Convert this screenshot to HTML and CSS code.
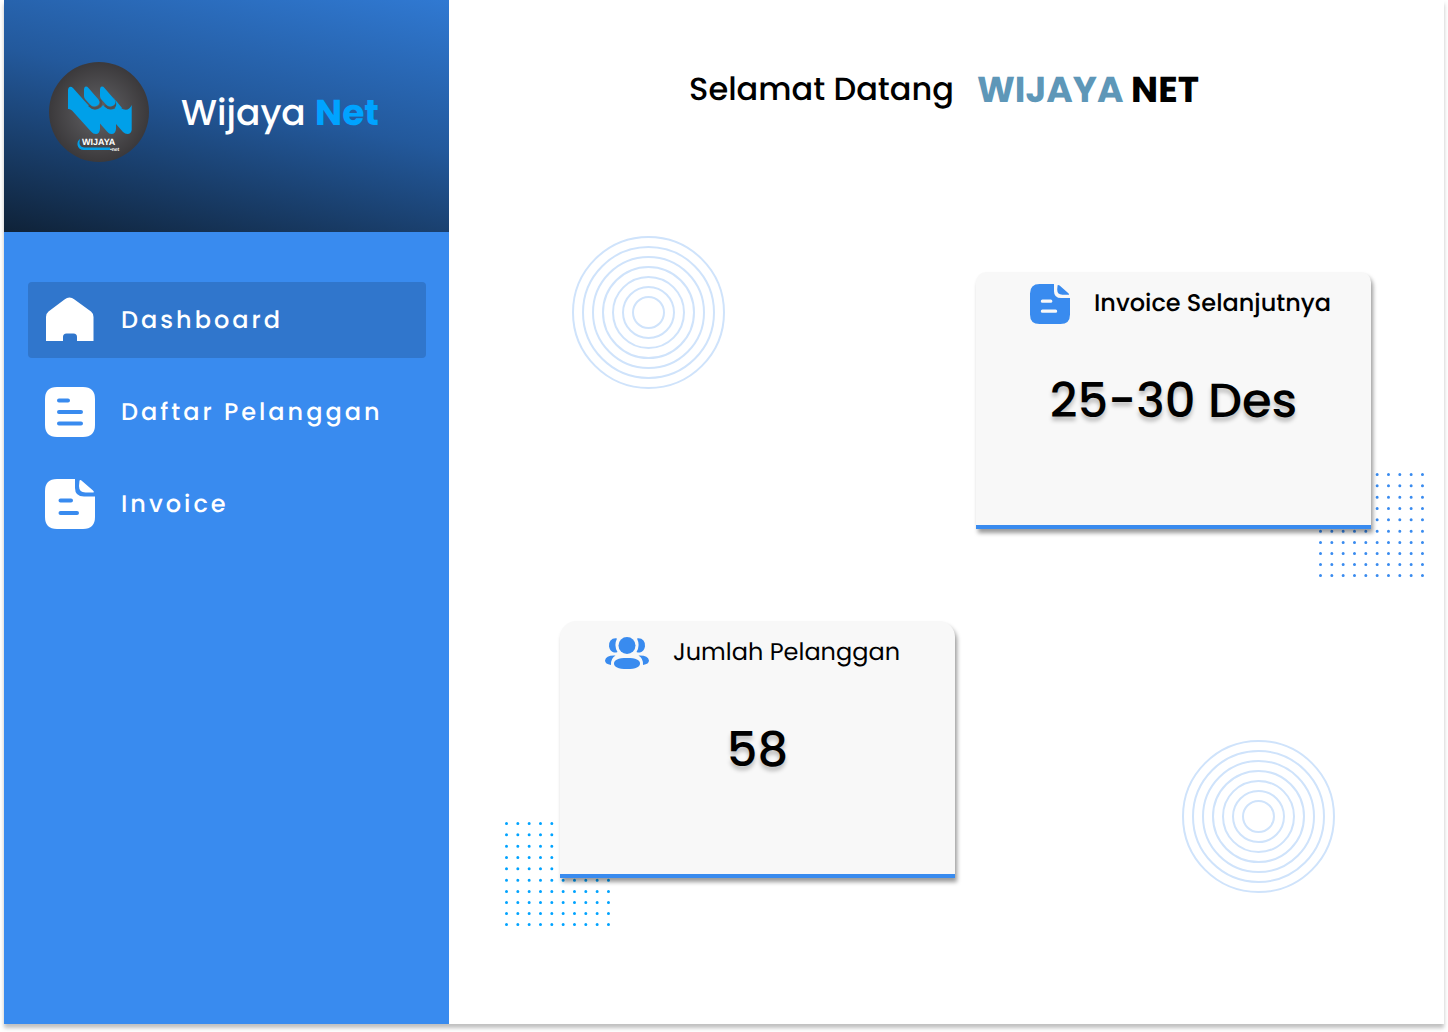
FILE: index.html
```html
<!DOCTYPE html>
<html lang="id">
<head>
<meta charset="utf-8">
<meta name="viewport" content="width=device-width, initial-scale=1">
<title>Wijaya Net - Dashboard</title>
<link rel="stylesheet" href="styles.css">
</head>
<body>
<svg class="sprite" aria-hidden="true">
  <symbol id="invoice" viewBox="0 0 50 50">
    <path fill-rule="evenodd" d="M12 0H30V9Q30 17.500 39 17.500H50V38Q50 50 38 50H12Q0 50 0 38V12Q0 0 12 0ZM15.500 19.500a2 2 0 0 0 0 4H26a2 2 0 0 0 0-4ZM15.500 32a2 2 0 0 0 0 4H32a2 2 0 0 0 0-4Z"/>
    <path d="M34.500 1.500Q35.500.500 37 2L48 11.500Q50 13.500 47.500 13.500H40.500Q34 13.500 34 7Z"/>
  </symbol>
  <symbol id="rings" viewBox="0 0 153 153">
    <g fill="none" stroke="#cfe3fb" stroke-width="2">
      <circle cx="76.500" cy="76.500" r="15.500"/><circle cx="76.500" cy="76.500" r="25.500"/><circle cx="76.500" cy="76.500" r="35.500"/><circle cx="76.500" cy="76.500" r="45.500"/><circle cx="76.500" cy="76.500" r="55.500"/><circle cx="76.500" cy="76.500" r="65.500"/><circle cx="76.500" cy="76.500" r="75.500"/>
    </g>
  </symbol>
  <symbol id="dots" viewBox="0 0 105 104">
    <path fill="none" stroke="currentColor" stroke-width="3" stroke-linecap="round" stroke-dasharray="0 11.330" d="M1.500 1.500h102.500M1.500 12.800h102.500M1.500 24.200h102.500M1.500 35.500h102.500M1.500 46.800h102.500M1.500 58.200h102.500M1.500 69.500h102.500M1.500 80.500h102.500M1.500 91.500h102.500M1.500 102.500h102.500"/>
  </symbol>
  <symbol id="leaf" viewBox="0 0 100 100" overflow="visible">
    <path d="M35 27Q35.500 24.500 37 24.600Q38.300 24.600 39.500 26L49.500 37.500Q52 41 48.500 43.500Q44 46 41 42.500L36 37Q35 35.500 35 34Z"/>
  </symbol>
</svg>
<div class="page">
  <aside class="sidebar">
    <div class="brand">
      <svg class="logo" viewBox="0 0 100 100" aria-hidden="true">
        <defs>
          <radialGradient id="disc"><stop offset="0" stop-color="#636366"/><stop offset="1" stop-color="#3b393b"/></radialGradient>
        </defs>
        <circle cx="50" cy="50" r="50" fill="url(#disc)"/>
        <path fill="#00a0e9" d="M19 28Q19.500 24.700 21.500 24.700Q22.700 24.700 24 26L40 44Q45.500 50 52 45.500L54 43L56 45Q62 50 68 45L69 43L71 45.500Q79 51 82.700 43V68Q82 72 78.500 72Q76 72 74 70L67 62V67Q66.500 72 62.500 72Q60 72 58 69.500L51 61.500V67Q50.500 72 47 72Q44 72 42 69.500L23 48.500Q21 46.500 19 47Z"/>
        <path fill="none" stroke="#505052" stroke-width="2" d="M40 43.500Q45.500 49 51 44Q53 41.500 51 37.500M56 43.500Q61.500 49 66 43.500Q68 41 66 37.500"/>
        <path fill="#00a0e9" d="M64 35L73 46L67 50L66 46Q68.500 42 66 38Z"/>
        <g fill="#00a0e9"><use href="#leaf" width="100" height="100"/><use href="#leaf" x="16" width="100" height="100"/></g>
        <path fill="#00a0e9" d="M31 77Q28 79 28.500 83Q29.500 88 35 88H61V85.500H35Q29 85 31 77Z"/>
        <text class="logo-name" x="33" y="83">WIJAYA</text>
        <text class="logo-net" x="61" y="89">•net</text>
      </svg>
      <p class="brand-name">Wijaya <strong>Net</strong></p>
    </div>
    <nav class="nav">
      <a class="nav-link active" href="#" aria-current="page">
        <svg class="nav-icon" viewBox="0 0 50 50" aria-hidden="true"><path d="M1 46V22Q1 18.500 3.500 16.500L19.500 4.500Q24.500.500 29.500 4.500L46 16.500Q48.500 18.500 48.500 22V46H32V42Q32 38.500 28.500 38.500H21.500Q18 38.500 18 42V46Z"/></svg>
        Dashboard
      </a>
      <a class="nav-link" href="#">
        <svg class="nav-icon" viewBox="0 0 50 50" aria-hidden="true"><path fill-rule="evenodd" d="M12 0H38Q50 0 50 12V38Q50 50 38 50H12Q0 50 0 38V12Q0 0 12 0ZM14 11.500a2 2 0 0 0 0 4H23a2 2 0 0 0 0-4ZM14 23a2 2 0 0 0 0 4H36a2 2 0 0 0 0-4ZM14 34.500a2 2 0 0 0 0 4H36a2 2 0 0 0 0-4Z"/></svg>
        Daftar Pelanggan
      </a>
      <a class="nav-link" href="#">
        <svg class="nav-icon" aria-hidden="true"><use href="#invoice"/></svg>
        Invoice
      </a>
    </nav>
  </aside>
  <main class="main">
    <h1 class="welcome"><span class="greeting">Selamat Datang</span> <span class="company"><span class="company-first">WIJAYA</span> NET</span></h1>
    <div class="board">
      <svg class="rings" aria-hidden="true"><use href="#rings"/></svg>
      <div class="slot slot-end">
        <svg class="dots dots-right" aria-hidden="true"><use href="#dots"/></svg>
        <section class="card card-next">
          <h2 class="card-title"><svg class="card-icon" aria-hidden="true"><use href="#invoice"/></svg>Invoice Selanjutnya</h2>
          <p class="card-value">25-30 Des</p>
        </section>
      </div>
      <div class="slot">
        <svg class="dots dots-left" aria-hidden="true"><use href="#dots"/></svg>
        <section class="card card-count">
          <h2 class="card-title"><svg class="card-icon people" viewBox="0 0 44 32" aria-hidden="true"><circle cx="22" cy="8.500" r="8.500"/><path d="M22 21C31 21 35 23 35 26.500S31 32 22 32S9 30 9 26.500S13 21 22 21Z"/><path d="M12 1.500Q8 .800 5.500 3.500Q3.500 6 4 9.500Q5 14.500 9 15.500Q11 15.800 12.500 15Q8.500 8.500 12 1.500ZM32 1.500Q36 .800 38.500 3.500Q40.500 6 40 9.500Q39 14.500 35 15.500Q33 15.800 31.500 15Q35.500 8.500 32 1.500ZM10.500 18.500Q1 18 0 23.500Q0 27 6 28Q5.500 21.500 10.500 18.500ZM33.500 18.500Q43 18 44 23.500Q44 27 38 28Q38.500 21.500 33.500 18.500Z"/></svg>Jumlah Pelanggan</h2>
          <p class="card-value">58</p>
        </section>
      </div>
      <svg class="rings rings-end" aria-hidden="true"><use href="#rings"/></svg>
    </div>
  </main>
</div>
</body>
</html>
```
FILE: styles.css
```css
* { box-sizing: border-box; }

body {
  margin: 0;
  padding: 0 4px 8px;
  background: #fff;
  color: #000;
  font-family: "Poppins", "Inter", sans-serif;
  text-rendering: geometricPrecision;
}

h1, h2, p { margin: 0; font-weight: 400; }

.sprite { position: absolute; width: 0; height: 0; }

.page {
  display: flex;
  min-height: calc(100vh - 8px);
  background: #fff;
  box-shadow: 0 4px 4px rgba(0, 0, 0, 0.25);
}

.sidebar {
  flex: 0 0 445px;
  background: #398bef;
  color: #fff;
}

.brand {
  display: flex;
  align-items: center;
  gap: 32px;
  padding: 62px 45px 70px;
  background: linear-gradient(193deg, #3079d2 0%, #23599c 45%, #0f2238 100%);
}

.logo { width: 100px; height: 100px; }
.logo-name { fill: #fff; font-family: "Liberation Sans", sans-serif; font-size: 9px; font-weight: 700; }
.logo-net { fill: #fff; font-family: "Liberation Sans", sans-serif; font-size: 5px; font-weight: 700; }

.brand-name {
  padding-top: 2px;
  font-size: 36px;
  font-weight: 500;
  line-height: 48px;
}
.brand-name strong { color: #00a3ff; font-weight: 700; }

.nav {
  display: flex;
  flex-direction: column;
  gap: 16px;
  padding: 50px 23px 50px 24px;
}

.nav-link {
  display: flex;
  align-items: center;
  gap: 26px;
  padding: 13px 17px;
  border-radius: 4px;
  color: #fff;
  font-size: 24px;
  font-weight: 500;
  letter-spacing: 3px;
  text-decoration: none;
}
.nav-link.active { background: #3076cc; }
.nav-icon { width: 50px; height: 50px; fill: currentColor; }

.main { flex: 1; min-width: 0; padding-top: 60px; }

.welcome {
  display: flex;
  justify-content: center;
  align-items: center;
  gap: 23px;
  padding-right: 5px;
  line-height: 60px;
}
.greeting { font-size: 32px; font-weight: 500; }
.company { font-size: 36px; font-weight: 700; }
.company-first { color: #5e97b8; }

.board {
  display: grid;
  grid-template-columns: 1fr 1fr;
  gap: 92px 21px;
  padding: 116px 73px 80px 111px;
}

.rings { width: 153px; height: 153px; margin: 0 12px; }
.rings-end { justify-self: end; align-self: end; margin: 119px 36px 0; }

.slot { position: relative; isolation: isolate; align-self: start; }
.slot-end { margin-top: 36px; }

.dots { position: absolute; z-index: -1; bottom: -48px; width: 105px; height: 104px; }
.dots-right { right: -53px; color: #398bef; }
.dots-left { left: -55px; color: #00a3ff; }

.card {
  min-height: 257px;
  padding: 8px 24px 48px;
  border-bottom: 4px solid #398bef;
  border-radius: 10px 10px 0 0;
  background: #f8f8f8;
  box-shadow: 2px 4px 4px rgba(0, 0, 0, 0.4);
}
.card-count { border-radius: 16px 16px 0 0; }

.card-title {
  display: flex;
  align-items: center;
  gap: 24px;
  font-size: 24px;
  line-height: 48px;
}
.card-next .card-title { padding-left: 30px; font-weight: 500; }
.card-count .card-title { padding-left: 21px; }
.card-icon { width: 40px; height: 40px; fill: #398bef; }
.card-icon.people { width: 44px; height: 32px; }

.card-value {
  margin-top: 43px;
  font-size: 48px;
  font-weight: 500;
  line-height: 60px;
  text-align: center;
  text-shadow: 0 4px 4px rgba(0, 0, 0, 0.25);
}
```
